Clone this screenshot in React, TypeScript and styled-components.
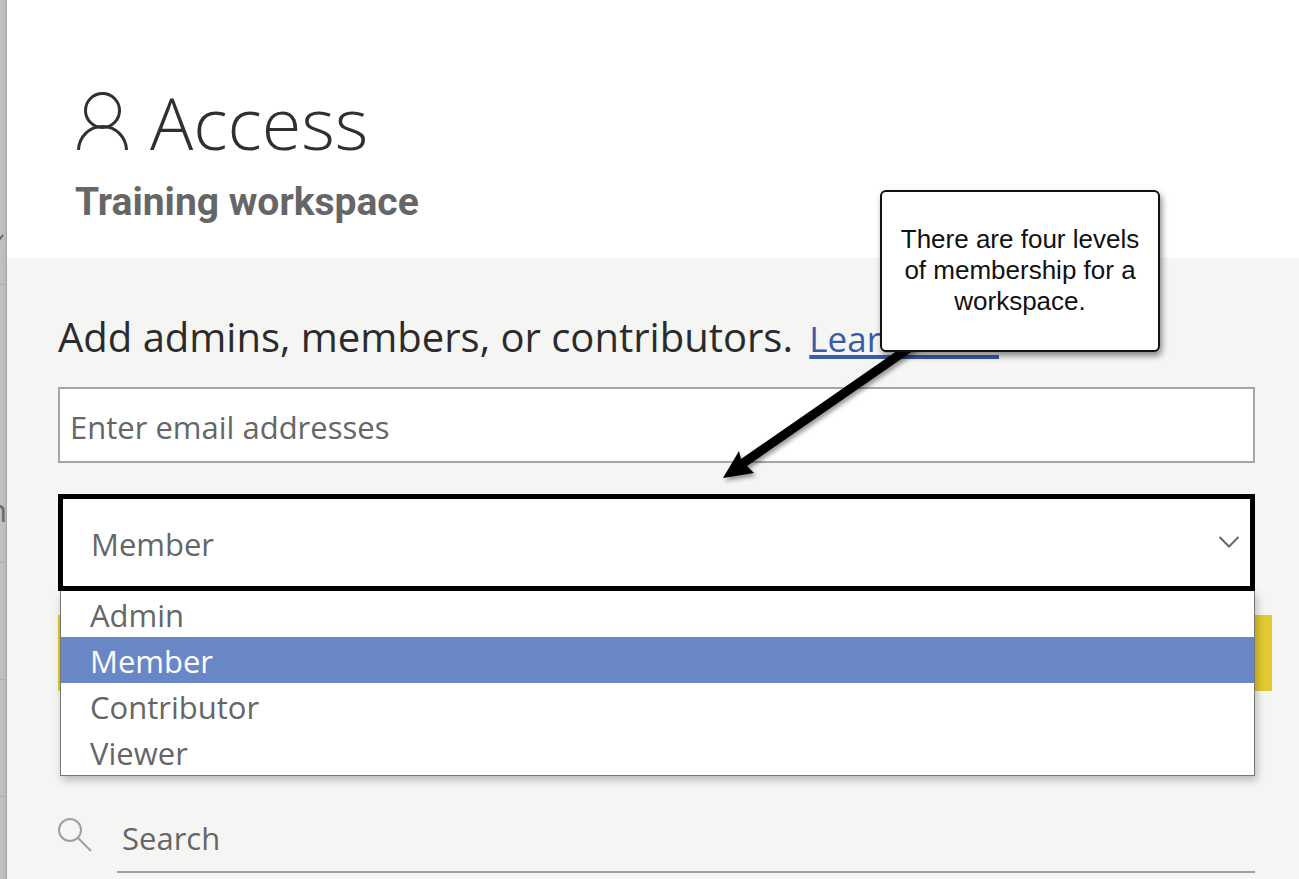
import React, { useState } from "react";
import styled, { createGlobalStyle } from "styled-components";

const GlobalStyle = createGlobalStyle`
  *, *::before, *::after { box-sizing: border-box; }
  body { margin: 0; background: #f5f5f4; font-family: "Open Sans", "Noto Sans", sans-serif; }
  h1, h2, p, ul { margin: 0; padding: 0; }
`;

const Page = styled.div`
  display: grid;
  grid-template-columns: 7px minmax(0, 1fr);
  min-height: 100vh;
`;

const Backdrop = styled.aside`
  display: flex;
  flex-direction: column;
  overflow: hidden;
  background: linear-gradient(to right, #c2c2c2, #bcbcbc 5px, #a4a4a4);
`;

const BackdropRow = styled.div<{ $height: number }>`
  display: flex;
  align-items: flex-end;
  justify-content: flex-end;
  flex: none;
  height: ${(p) => p.$height}px;
  padding-bottom: 32px;
  border-bottom: 1px solid #b0b0b0;
  color: #6e6a68;
  font-size: 31px;
  line-height: 40px;
`;

const TickRow = styled(BackdropRow)`
  padding-bottom: 42px;
`;

const Panel = styled.main`
  position: relative;
  background: #f5f5f4;
`;

const Header = styled.header`
  height: 258px;
  padding: 70px 68px 0;
  background: #fff;
`;

const TitleRow = styled.div`
  display: flex;
  align-items: center;
  gap: 20px;
  margin-bottom: 2px;
`;

const Title = styled.h1`
  color: #303030;
  font-size: 72px;
  font-weight: 300;
  line-height: 104px;
`;

const Subtitle = styled.h2`
  color: #666;
  font-family: Roboto, sans-serif;
  font-size: 39px;
  font-weight: 700;
  line-height: 52px;
`;

const Form = styled.form`
  display: flex;
  flex-direction: column;
  padding: 47px 27px 0 51px;
`;

const Prompt = styled.p`
  color: #2b2b2b;
  font-size: 40px;
  line-height: 64px;
  white-space: nowrap;
`;

const LearnMore = styled.a`
  margin-left: 6px;
  color: #3a5ba8;
  font-size: 35px;
  text-decoration: underline;
  text-decoration-thickness: 4px;
  text-underline-offset: 3px;
  text-decoration-skip-ink: none;
`;

const EmailInput = styled.input`
  height: 76px;
  margin: 16px 17px 0 0;
  padding: 4px 10px 0;
  border: 2px solid #a6a6a6;
  border-radius: 0;
  background: #fff;
  color: #666;
  font: 31px "Open Sans", sans-serif;
  outline: none;
  &::placeholder { color: #666; opacity: 1; }
`;

const RoleField = styled.div`
  position: relative;
  margin: 31px 17px 0 0;
`;

const RoleSelect = styled.select`
  display: block;
  width: 100%;
  height: 97px;
  padding: 2px 28px 0;
  appearance: none;
  border: 5px solid #000;
  border-radius: 0;
  background: #fff;
  color: #666;
  font: 31px "Open Sans", sans-serif;
  outline: none;
`;

const Chevron = styled.svg`
  position: absolute;
  top: 40px;
  right: 15px;
  pointer-events: none;
`;

const RoleList = styled.ul`
  position: absolute;
  z-index: 1;
  top: 100%;
  left: 2px;
  right: 0;
  border: 1px solid #777;
  border-top: 0;
  background: #fff;
  box-shadow: 2px 4px 8px rgba(0, 0, 0, 0.25);
  list-style: none;
`;

const RoleOption = styled.li<{ $active: boolean }>`
  height: 46px;
  padding: 0 29px;
  background: ${(p) => (p.$active ? "#6986c6" : "#fff")};
  color: ${(p) => (p.$active ? "#fff" : "#666")};
  font-size: 31px;
  line-height: 49px;
  cursor: pointer;
`;

const AddButton = styled.button`
  height: 76px;
  margin-top: 24px;
  border: 0;
  background: #e2ca30;
`;

const SearchRow = styled.div`
  display: flex;
  gap: 25px;
  margin: 116px 17px 0 0;
`;

const SearchIcon = styled.svg`
  flex: none;
  margin-top: 10px;
`;

const SearchInput = styled.input`
  flex: 1;
  min-width: 0;
  height: 66px;
  padding: 0 5px 2px;
  border: 0;
  border-bottom: 2px solid #a0a0a0;
  border-radius: 0;
  background: transparent;
  color: #666;
  font: 31px "Open Sans", sans-serif;
  outline: none;
  &::placeholder { color: #666; opacity: 1; }
`;

const Callout = styled.div`
  position: absolute;
  z-index: 3;
  top: 190px;
  right: 139px;
  display: flex;
  align-items: center;
  width: 280px;
  height: 162px;
  padding: 0 16px 2px;
  border: 2px solid #111;
  border-radius: 6px;
  background: #fff;
  box-shadow: 2px 4px 6px rgba(0, 0, 0, 0.45);
  color: #111;
  font: 26px/31px "Liberation Sans", Arial, sans-serif;
  text-align: center;
`;

const Arrow = styled.svg`
  position: absolute;
  z-index: 2;
  top: 340px;
  right: 374px;
  pointer-events: none;
  filter: drop-shadow(2px 3px 2px rgba(0, 0, 0, 0.4));
`;

const roles = ["Admin", "Member", "Contributor", "Viewer"];

export default function App() {
  const [role, setRole] = useState("Member");

  return (
    <Page>
      <GlobalStyle />
      <Backdrop aria-hidden="true">
        <TickRow $height={285}>
          <svg width="7" height="8" viewBox="0 0 7 8" fill="none" stroke="#666" strokeWidth="2">
            <path d="M-3 3L-1 6L3 1" />
          </svg>
        </TickRow>
        <BackdropRow $height={278}>n</BackdropRow>
        <BackdropRow $height={117} />
        <BackdropRow $height={117} />
      </Backdrop>
      <Panel>
        <Header>
          <TitleRow>
            <svg width="55" height="60" viewBox="0 0 55 60" fill="none" stroke="#303030" strokeWidth="3">
              <circle cx="27.5" cy="18.5" r="17" />
              <path d="M3.500 58C4 45 14 34.500 27.500 34.500S51 45 51.500 58" />
            </svg>
            <Title>Access</Title>
          </TitleRow>
          <Subtitle>Training workspace</Subtitle>
        </Header>
        <Form onSubmit={(e) => e.preventDefault()}>
          <Prompt>
            Add admins, members, or contributors. <LearnMore href="#learn">Learn more</LearnMore>
          </Prompt>
          <EmailInput type="email" aria-label="Enter email addresses" placeholder="Enter email addresses" />
          <RoleField>
            <RoleSelect aria-label="Role" value={role} onChange={(e) => setRole(e.target.value)}>
              {roles.map((r) => (
                <option key={r}>{r}</option>
              ))}
            </RoleSelect>
            <Chevron width="22" height="16" viewBox="0 0 22 16" fill="none" stroke="#666" strokeWidth="2">
              <path d="M1.500 3L11 12.500L20.500 3" />
            </Chevron>
            <RoleList role="listbox" aria-label="Roles">
              {roles.map((r) => (
                <RoleOption
                  key={r}
                  role="option"
                  aria-selected={r === role}
                  $active={r === role}
                  onClick={() => setRole(r)}
                >
                  {r}
                </RoleOption>
              ))}
            </RoleList>
          </RoleField>
          <AddButton type="submit" aria-label="Add" />
          <SearchRow>
            <SearchIcon width="34" height="36" viewBox="0 0 34 36" fill="none" stroke="#a0a0a0" strokeWidth="2">
              <circle cx="12" cy="13" r="11" />
              <path d="M20 21L33 34" />
            </SearchIcon>
            <SearchInput type="search" aria-label="Search" placeholder="Search" />
          </SearchRow>
        </Form>
        <Arrow width="216" height="150" viewBox="0 0 216 150">
          <path d="M195 6L32 119L30 111L14 138L45 133L38 126L211 6Z" fill="#000" />
        </Arrow>
        <Callout role="note">There are four levels of membership for a workspace.</Callout>
      </Panel>
    </Page>
  );
}
